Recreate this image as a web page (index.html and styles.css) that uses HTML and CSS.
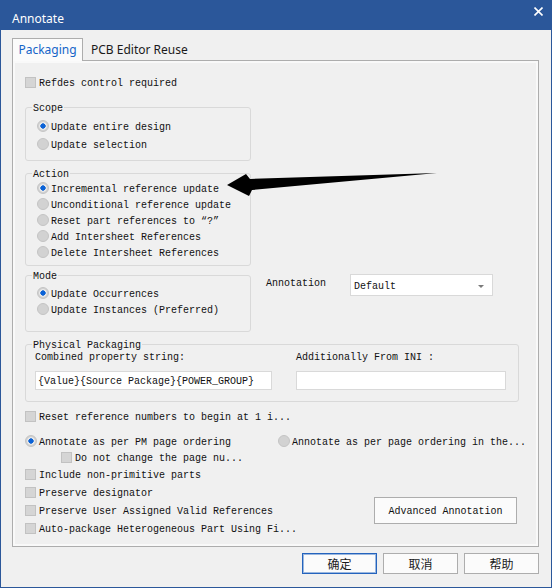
FILE: index.html
```html
<!DOCTYPE html>
<html>
<head>
<meta charset="utf-8">
<link rel="stylesheet" href="styles.css">
</head>
<body>
<div class="window">
  <div class="titlebar">
    <span class="title">Annotate</span>
    <svg class="close" width="9" height="9" viewBox="0 0 9 9"><path d="M0.5 0.5L8.5 8.5M8.5 0.5L0.5 8.5" stroke="#fff" stroke-width="1.6"/></svg>
  </div>
  <div class="content">
    <div class="tabs">
      <div class="tab active">Packaging</div>
      <div class="tab">PCB Editor Reuse</div>
    </div>
    <div class="panel">
      <div class="row"><span class="cb"></span>Refdes control required</div>

      <fieldset class="group scope">
        <legend>Scope</legend>
        <div class="row"><span class="rb on"></span>Update entire design</div>
        <div class="row"><span class="rb"></span>Update selection</div>
      </fieldset>

      <fieldset class="group action">
        <legend>Action</legend>
        <div class="row"><span class="rb on"></span>Incremental reference update</div>
        <div class="row"><span class="rb"></span>Unconditional reference update</div>
        <div class="row"><span class="rb"></span>Reset part references to “?”</div>
        <div class="row"><span class="rb"></span>Add Intersheet References</div>
        <div class="row"><span class="rb"></span>Delete Intersheet References</div>
      </fieldset>

      <div class="mode-row">
        <fieldset class="group mode">
          <legend>Mode</legend>
          <div class="row"><span class="rb on"></span>Update Occurrences</div>
          <div class="row"><span class="rb"></span>Update Instances (Preferred)</div>
        </fieldset>
        <div class="anno-label">Annotation</div>
        <div class="select"><span>Default</span><span class="caret"></span></div>
      </div>

      <fieldset class="group phys">
        <legend>Physical Packaging</legend>
        <div class="cols">
          <div class="col col1">
            <div class="lbl">Combined property string:</div>
            <div class="field">{Value}{Source Package}{POWER_GROUP}</div>
          </div>
          <div class="col col2">
            <div class="lbl">Additionally From INI :</div>
            <div class="field"></div>
          </div>
        </div>
      </fieldset>

      <div class="row reset"><span class="cb"></span>Reset reference numbers to begin at 1 i...</div>
      <div class="row radio-row">
        <div class="opt opt-left"><span class="rb on"></span>Annotate as per PM page ordering</div>
        <div class="opt"><span class="rb"></span>Annotate as per page ordering in the...</div>
      </div>
      <div class="row donot"><span class="cb"></span>Do not change the page nu...</div>

      <div class="bottom">
        <div class="checks">
          <div class="row tall"><span class="cb"></span>Include non-primitive parts</div>
          <div class="row tall"><span class="cb"></span>Preserve designator</div>
          <div class="row tall"><span class="cb"></span>Preserve User Assigned Valid References</div>
          <div class="row tall"><span class="cb"></span>Auto-package Heterogeneous Part Using Fi...</div>
        </div>
        <div class="adv">Advanced Annotation</div>
      </div>
    </div>
    <div class="footer">
      <div class="btn default">确定</div>
      <div class="btn">取消</div>
      <div class="btn">帮助</div>
    </div>
  </div>
</div>
<svg class="arrow" width="552" height="588" viewBox="0 0 552 588">
  <polygon points="227,185 246,174 250,179 437,173 252,190 249,196" fill="#000"/>
</svg>
</body>
</html>
```
FILE: styles.css
```css
* { box-sizing: border-box; }
html, body { margin: 0; padding: 0; }
body {
  position: relative;
  width: 552px;
  height: 588px;
  overflow: hidden;
  background: #f0f0f0;
  font-family: "Liberation Mono", monospace;
  font-size: 10px;
  line-height: 12px;
  color: #111;
}
.window {
  width: 552px;
  height: 588px;
  border: 1px solid #2b579a;
  border-top: 0;
  background: #f0f0f0;
}
.titlebar {
  height: 30px;
  background: #2b579a;
  display: flex;
  align-items: center;
  padding: 6px 8px 0 11px;
  color: #fff;
  font: 12px "Noto Sans", sans-serif;
}
.close {
  margin-left: auto;
  align-self: flex-start;
  margin-top: 1px;
}
.content {
  padding: 8px 12px 0 11px;
}
.tabs {
  display: flex;
  height: 22px;
  font: 12px "Noto Sans", sans-serif;
}
.tab {
  display: flex;
  align-items: center;
  height: 22px;
  padding-left: 8px;
  color: #1a1a1a;
}
.tab.active {
  position: relative;
  z-index: 1;
  width: 71px;
  height: 23px;
  padding: 0 0 1px 0;
  justify-content: center;
  border: 1px solid #adadad;
  border-bottom: 0;
  background: #fbfbfb;
  color: #1565c8;
}
.panel {
  height: 487px;
  border: 1px solid #adadad;
  box-shadow: inset 0 0 0 2px #f9f9f9;
  padding: 13px 19px 0 12px;
}
.row {
  display: flex;
  align-items: center;
  height: 16px;
  padding-top: 4px;
  white-space: nowrap;
}
.cb {
  flex: none;
  width: 11px;
  height: 11px;
  margin: -4px 3px 0 0;
  border: 1px solid #c2c2c2;
  background: #d5d5d5;
}
.rb {
  flex: none;
  width: 12px;
  height: 12px;
  margin: -4px 2px 0 0;
  border-radius: 50%;
  border: 1px solid #c4c4c4;
  background: #d2d2d2;
}
.rb.on {
  background: radial-gradient(circle, #0b62d6 0 2.4px, #e8e8e8 2.9px 3.6px, #d2d2d2 4.1px);
}
.group {
  margin: 0;
  min-width: 0;
  border: 1px solid #d9d9d9;
  border-radius: 3px;
  padding: 0 0 0 11px;
}
.group legend {
  padding: 4px 1px 0;
  margin-left: -5px;
  line-height: 12px;
}
.scope {
  width: 226px;
  margin-top: 9px;
  padding-top: 2px;
  padding-bottom: 7px;
}
.scope .row { height: 18px; }
.action {
  width: 226px;
  margin-top: 4px;
  padding-top: 0;
  padding-bottom: 5px;
}
.action .row:first-of-type { margin-top: -1px; }
.mode-row {
  display: flex;
  align-items: flex-start;
  margin-top: 1px;
}
.mode {
  width: 226px;
  padding-top: 2px;
  padding-bottom: 14px;
}
.anno-label {
  width: 84px;
  margin: 11px 0 0 15px;
}
.select {
  width: 143px;
  height: 22px;
  margin-top: 7px;
  border: 1px solid #d9d9d9;
  background: #fff;
  display: flex;
  align-items: center;
  justify-content: space-between;
  padding: 3px 8px 0 3px;
}
.caret {
  width: 0;
  height: 0;
  border-left: 3px solid transparent;
  border-right: 3px solid transparent;
  border-top: 3px solid #7a7a7a;
}
.phys {
  width: 494px;
  margin-top: 4px;
  padding: 0 12px 11px 9px;
}
.phys legend { margin-left: -3px; }
.cols {
  display: flex;
  gap: 24px;
}
.col1 { width: 237px; }
.col2 { width: 210px; }
.field {
  margin-top: 7px;
  height: 19px;
  border: 1px solid #d9d9d9;
  background: #fff;
  padding: 1px 0 0 2px;
  line-height: 17px;
  white-space: nowrap;
  overflow: hidden;
}
.reset { margin-top: 6px; }
.radio-row { margin-top: 9px; }
.opt {
  flex: none;
  display: flex;
  align-items: center;
}
.opt-left { width: 253px; }
.donot { padding-left: 36px; }
.bottom {
  display: flex;
  justify-content: space-between;
  align-items: flex-start;
}
.row.tall { height: 18px; }
.adv {
  width: 143px;
  height: 27px;
  margin: 32px 2px 0 0;
  border: 1px solid #adadad;
  background: #fbfbfb;
  display: flex;
  align-items: center;
  justify-content: center;
  padding-top: 2px;
}
.footer {
  display: flex;
  justify-content: flex-end;
  gap: 6px;
  margin-top: 6px;
}
.btn {
  width: 75px;
  height: 21px;
  border: 1px solid #adadad;
  background: #fbfbfb;
  display: flex;
  align-items: center;
  justify-content: center;
  font: 12px "Noto Sans CJK SC", sans-serif;
  color: #1a1a1a;
}
.btn.default {
  border-color: #2463bd;
  box-shadow: inset 0 0 0 1px rgba(36, 99, 189, 0.45);
}
.arrow {
  position: absolute;
  left: 0;
  top: 0;
  pointer-events: none;
}
```
